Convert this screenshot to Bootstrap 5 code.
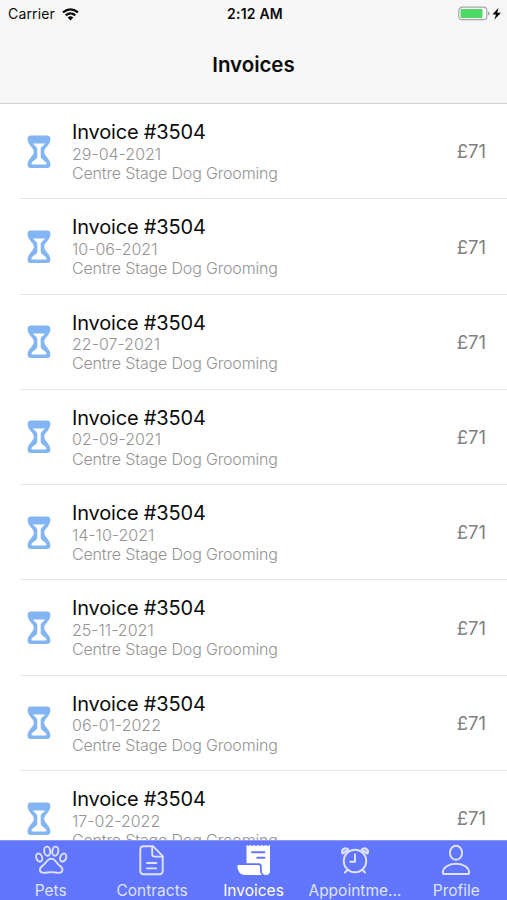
<!DOCTYPE html>
<html lang="en">
<head>
<meta charset="utf-8">
<meta name="viewport" content="width=device-width, initial-scale=1">
<title>Invoices</title>
<link href="https://cdn.jsdelivr.net/npm/bootstrap@5.3.0/dist/css/bootstrap.min.css" rel="stylesheet">
<style>
  body { font-family: Inter, "Liberation Sans", sans-serif; color: #0c0c0c; }
  .app-header { height: 104px; background: #f7f7f7; border-bottom: 1px solid #d2d2d2; }
  .status-bar { height: 27px; font-size: 14px; line-height: 28px; padding: 0 5px 0 8px; }
  .status-bar .carrier { letter-spacing: .15px; }
  .status-time { font-weight: 600; font-size: 14px; letter-spacing: .2px; }
  .page-title { font-size: 20.5px; line-height: 26px; font-weight: 600; margin: 25px 0 0; letter-spacing: -.05px; }
  .invoice-row { height: 95.3px; padding: 17px 21px 0 27px; background: linear-gradient(#e6e6e8, #e6e6e8) 20px 100% / 100% 1px no-repeat; }
  .invoice-icon { width: 24px; height: 34px; margin-top: 13.5px; margin-right: 21px; color: #82b5f2; }
  .invoice-name { font-size: 20px; line-height: 23.5px; letter-spacing: -.18px; }
  .invoice-meta { font-size: 16px; line-height: 19.3px; color: #949494; font-weight: 300; }
  .invoice-meta.company { letter-spacing: -.16px; }
  .invoice-price { font-size: 18.5px; line-height: 22px; color: #808080; margin-top: 19.3px; }
  .tab-bar { height: 60px; background: #6175fd; color: #dfe3ff; border-top: 1px solid #8b98f5; }
  .tab-item { font-size: 15.5px; line-height: 18px; color: inherit; text-decoration: none; }
  .tab-item svg { width: 36px; height: 36px; margin-top: 2px; }
  .tab-item span { padding-top: 3px; }
  .tab-item.active { color: #fff; }
</style>
<script src="https://cdn.jsdelivr.net/npm/bootstrap@5.3.0/dist/js/bootstrap.bundle.min.js"></script>
</head>
<body>
<svg width="0" height="0" class="position-absolute" aria-hidden="true">
  <symbol id="hourglass" viewBox="0 0 24 34">
    <path fill="currentColor" fill-rule="evenodd" d="M4 .6H20Q23.5.6 23.4 4.1C23.2 10.5 17.2 12.5 17.2 16.8S23.2 23.5 23.4 29.5Q23.5 33.1 20 33.1H4Q.5 33.1.6 29.5C.8 23.5 6.8 21 6.8 16.8S.8 10.5.6 4.1Q.5.6 4 .6ZM6 8.4C7.3 10.8 10.3 11.2 10.3 14V21.5C10.3 24.8 5.6 25.2 4.5 28.3Q4.2 29.6 5.8 29.6H18.2Q19.8 29.6 19.5 28.3C18.4 25.2 13.7 24.8 13.7 21.5V14C13.7 11.2 16.7 10.8 18 8.4Z"/>
  </symbol>
</svg>
<div class="d-flex flex-column vh-100 overflow-hidden">
  <header class="app-header flex-shrink-0">
    <div class="status-bar row gx-0">
      <div class="col d-flex align-items-center">
        <span class="carrier">Carrier</span>
        <svg width="17" height="13" style="margin-left:7px" viewBox="0 0 17 13" fill="none" stroke="#080808" stroke-width="2.2"><path d="M1 4.4Q8.5-1.8 16 4.4M3.7 7.3Q8.5 3.3 13.3 7.3"/><path d="M5.7 9.5Q8.5 7.2 11.3 9.5L8.5 12.4Z" fill="#080808" stroke="none"/></svg>
      </div>
      <div class="col-auto status-time">2:12 AM</div>
      <div class="col d-flex align-items-center justify-content-end">
        <svg width="45" height="16" viewBox="0 0 45 16"><rect x="1.8" y="1.2" width="28" height="12.5" rx="3.5" fill="#fff" stroke="#a5a5a5" stroke-width="1.2"/><rect x="3.5" y="3" width="22" height="9" rx="1.2" fill="#4cd964"/><path d="M31 5.6Q32.7 6 32.7 7.5T31 9.4Z" fill="#a5a5a5"/><path d="M41.5 1.8 35.5 8.5H39L37.3 13.8 44 6.8H40.3Z" fill="#080808"/></svg>
      </div>
    </div>
    <h1 class="page-title text-center">Invoices</h1>
  </header>

  <main class="flex-grow-1 overflow-hidden" id="invoices">
    <div class="invoice-row d-flex align-items-start"><svg class="invoice-icon"><use href="#hourglass"/></svg><div class="flex-grow-1"><div class="invoice-name">Invoice #3504</div><div class="invoice-meta">29-04-2021</div><div class="invoice-meta company">Centre Stage Dog Grooming</div></div><div class="invoice-price">£71</div></div>
    <div class="invoice-row d-flex align-items-start"><svg class="invoice-icon"><use href="#hourglass"/></svg><div class="flex-grow-1"><div class="invoice-name">Invoice #3504</div><div class="invoice-meta">10-06-2021</div><div class="invoice-meta company">Centre Stage Dog Grooming</div></div><div class="invoice-price">£71</div></div>
    <div class="invoice-row d-flex align-items-start"><svg class="invoice-icon"><use href="#hourglass"/></svg><div class="flex-grow-1"><div class="invoice-name">Invoice #3504</div><div class="invoice-meta">22-07-2021</div><div class="invoice-meta company">Centre Stage Dog Grooming</div></div><div class="invoice-price">£71</div></div>
    <div class="invoice-row d-flex align-items-start"><svg class="invoice-icon"><use href="#hourglass"/></svg><div class="flex-grow-1"><div class="invoice-name">Invoice #3504</div><div class="invoice-meta">02-09-2021</div><div class="invoice-meta company">Centre Stage Dog Grooming</div></div><div class="invoice-price">£71</div></div>
    <div class="invoice-row d-flex align-items-start"><svg class="invoice-icon"><use href="#hourglass"/></svg><div class="flex-grow-1"><div class="invoice-name">Invoice #3504</div><div class="invoice-meta">14-10-2021</div><div class="invoice-meta company">Centre Stage Dog Grooming</div></div><div class="invoice-price">£71</div></div>
    <div class="invoice-row d-flex align-items-start"><svg class="invoice-icon"><use href="#hourglass"/></svg><div class="flex-grow-1"><div class="invoice-name">Invoice #3504</div><div class="invoice-meta">25-11-2021</div><div class="invoice-meta company">Centre Stage Dog Grooming</div></div><div class="invoice-price">£71</div></div>
    <div class="invoice-row d-flex align-items-start"><svg class="invoice-icon"><use href="#hourglass"/></svg><div class="flex-grow-1"><div class="invoice-name">Invoice #3504</div><div class="invoice-meta">06-01-2022</div><div class="invoice-meta company">Centre Stage Dog Grooming</div></div><div class="invoice-price">£71</div></div>
    <div class="invoice-row d-flex align-items-start"><svg class="invoice-icon"><use href="#hourglass"/></svg><div class="flex-grow-1"><div class="invoice-name">Invoice #3504</div><div class="invoice-meta">17-02-2022</div><div class="invoice-meta company">Centre Stage Dog Grooming</div></div><div class="invoice-price">£71</div></div>
  </main>

  <nav class="tab-bar row gx-0 flex-shrink-0 flex-nowrap">
    <a href="#" class="tab-item col d-flex flex-column align-items-center">
      <svg viewBox="0 0 36 36" fill="none" stroke="currentColor" stroke-width="1.9"><ellipse cx="14.2" cy="8.2" rx="3" ry="4.6" transform="rotate(-8 14.2 8.2)"/><ellipse cx="22.3" cy="8.2" rx="3" ry="4.6" transform="rotate(8 22.3 8.2)"/><ellipse cx="6.2" cy="14.6" rx="2.9" ry="4.2" transform="rotate(-22 6.2 14.6)"/><ellipse cx="30.2" cy="14.6" rx="2.9" ry="4.2" transform="rotate(22 30.2 14.6)"/><path d="M18.2 15.6C22 15.6 22.8 19.3 25.7 21.8C29 24.3 30.2 25.6 29.2 28.2C27.8 31.5 22.6 29.1 18.2 29.1S8.6 31.5 7.2 28.2C6.2 25.6 7.4 24.3 10.7 21.8C13.6 19.3 14.4 15.6 18.2 15.6Z"/></svg>
      <span>Pets</span>
    </a>
    <a href="#" class="tab-item col d-flex flex-column align-items-center">
      <svg viewBox="0 0 36 36" fill="none" stroke="currentColor" stroke-width="1.9" stroke-linecap="round" stroke-linejoin="round"><path d="M19 3.2H9.5Q6.3 3.2 6.3 6.4V28Q6.3 31.2 9.5 31.2H25.5Q28.7 31.2 28.7 28V13.2Z"/><path d="M18.2 3.5V11Q18.2 13.6 20.8 13.6H28.4M13 20H22.3M13 25.4H22.3"/></svg>
      <span>Contracts</span>
    </a>
    <a href="#" class="tab-item active col d-flex flex-column align-items-center">
      <svg viewBox="0 0 36 36"><path fill="currentColor" d="M10.5 2 12.4 3 14.3 2 16.2 3 18.1 2 20 3 21.9 2 23.8 3 25.7 2 27.6 3 29.5 2 31.4 3 34 2V27.5Q34 32 30 32Q26 32 25.6 27.5V22.5Q25.6 20.5 23.6 20.5H10.5Z"/><path fill="currentColor" d="M2 22H22.2Q24 22 24 24V27Q24 30 26 32H8.5Q2.2 31.5 1.4 24Q1.3 22 2 22Z"/><path fill="none" stroke="#6175fd" stroke-width="1.2" d="M10.5 21.2H22.8Q24.8 21.2 24.8 23.2V27.5Q25 30.5 27 32"/><path stroke="#6175fd" stroke-width="1.9" stroke-linecap="round" d="M16 9.3H28.5M21.2 14.7H28.5"/></svg>
      <span>Invoices</span>
    </a>
    <a href="#" class="tab-item col d-flex flex-column align-items-center">
      <svg viewBox="0 0 36 36" fill="none" stroke="currentColor" stroke-width="1.9" stroke-linecap="round" stroke-linejoin="round"><circle cx="18" cy="18" r="11.3"/><path d="M18 11.4V18.7H13.3M10.3 27 8 29.5M25.7 27 28 29.5"/><path d="M5.7 10.8C3.6 7.8 6.4 4.5 9.5 5.4Q11 5.8 11.4 6.7ZM30.3 10.8C32.4 7.8 29.6 4.5 26.5 5.4Q25 5.8 24.6 6.7Z" fill="currentColor" fill-opacity=".5"/></svg>
      <span>Appointme...</span>
    </a>
    <a href="#" class="tab-item col d-flex flex-column align-items-center">
      <svg viewBox="0 0 36 36" fill="none" stroke="currentColor" stroke-width="1.9" stroke-linejoin="round"><ellipse cx="18" cy="9.8" rx="6.1" ry="7"/><path d="M4.8 29.6C5 24.5 10.5 20.7 18 20.7S31 24.5 31.2 29.6Q31.3 31 30 31H6Q4.7 31 4.8 29.6Z"/></svg>
      <span>Profile</span>
    </a>
  </nav>
</div>
</body>
</html>
